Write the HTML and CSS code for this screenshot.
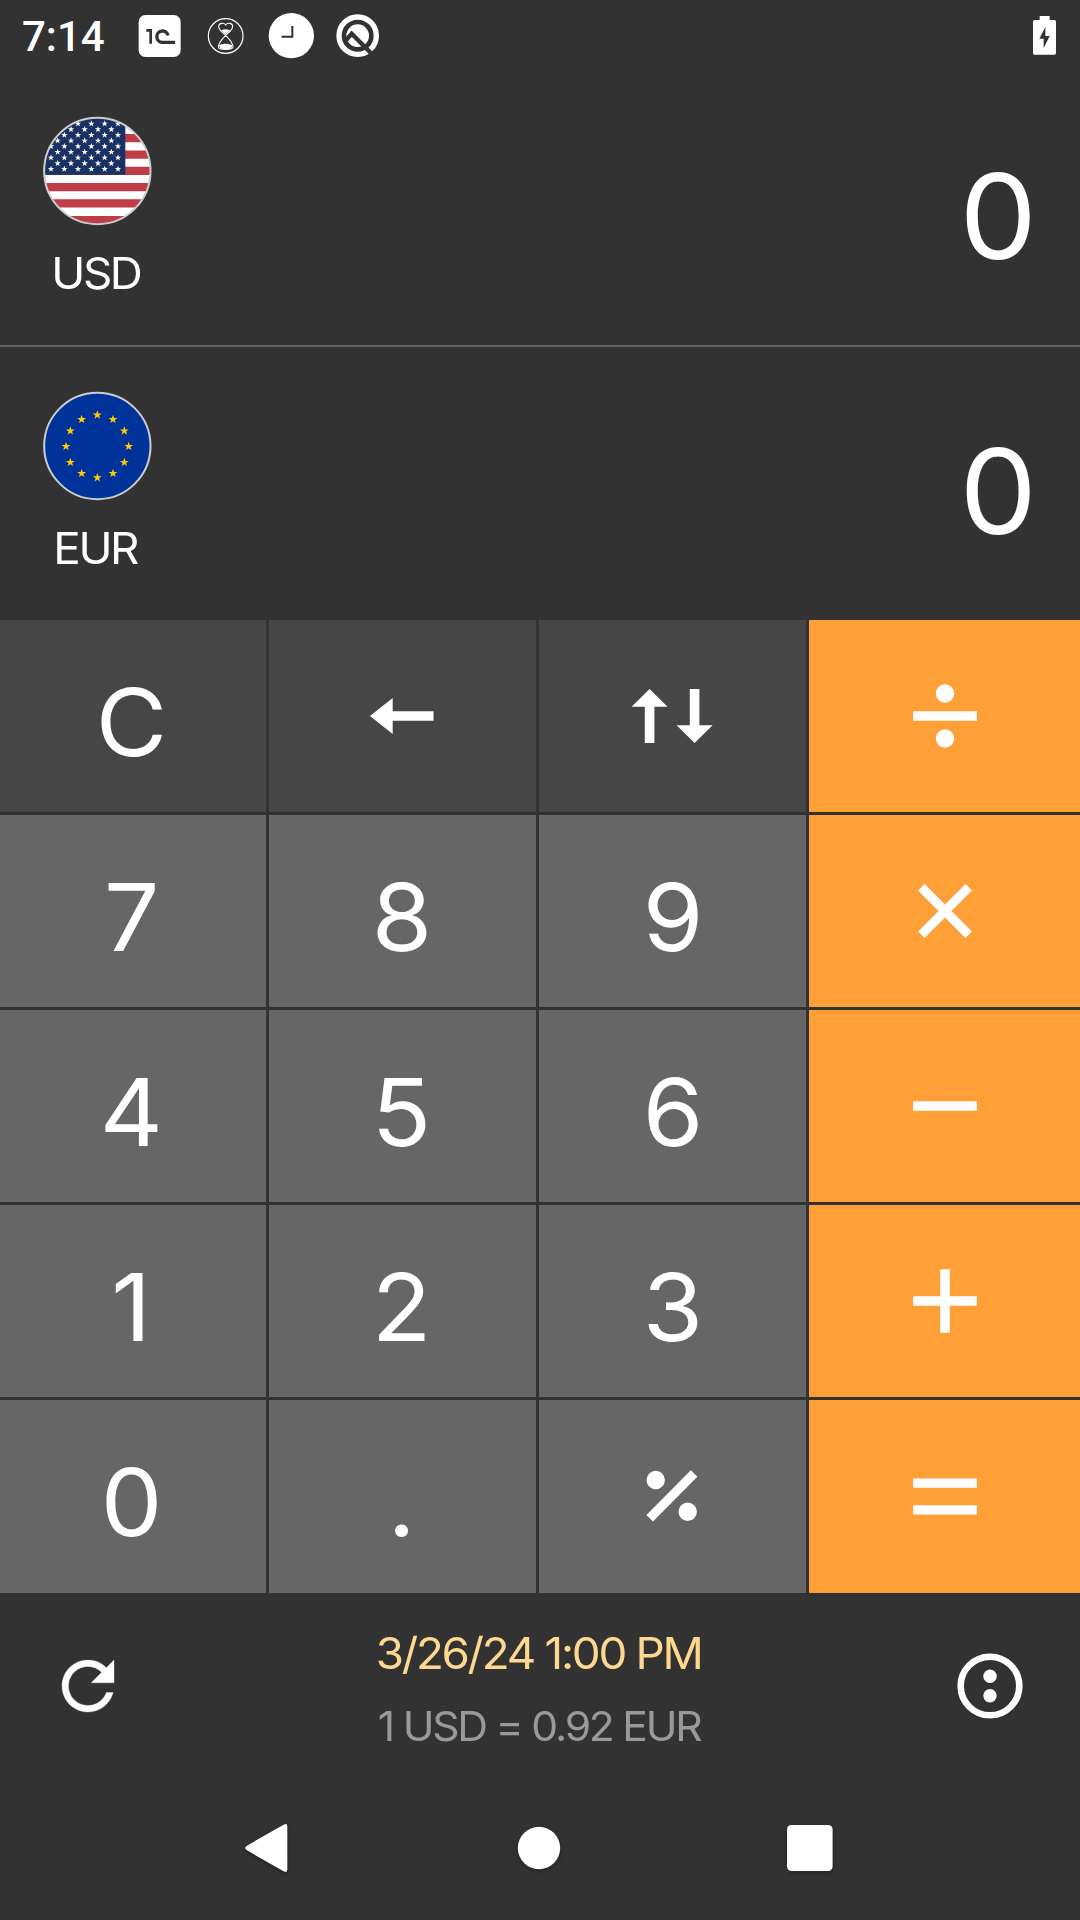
FILE: index.html
```html
<!DOCTYPE html>
<html lang="en">
<head>
<meta charset="utf-8">
<title>Currency calculator</title>
<link rel="stylesheet" href="styles.css">
</head>
<body>
<div class="screen">
  <header class="status">
    <span class="clock">7:14</span>
    <div class="notifications">
      <svg class="note" viewBox="408 36 144 144">
        <rect x="416" y="45" width="126" height="126" rx="20" fill="#fff"/>
        <path d="M439 91h13v40" fill="none" stroke="#323232" stroke-width="8"/>
        <path d="M504 106a17 17 0 1 0-17 21H525" fill="none" stroke="#323232" stroke-width="10"/>
      </svg>
      <svg class="note" viewBox="606 36 144 144">
        <g fill="none" stroke="#fff" stroke-width="3.6">
          <circle cx="677" cy="108" r="52"/>
          <path d="M677 106C666 96 655 89 656 78c1-9 16-11 21-3c5-8 20-6 21 3c1 11-10 18-21 28c-10 10-22 22-22 35c0 10 44 10 44 0c0-13-12-25-22-35z" stroke-width="3.2"/>
        </g>
        <path d="M664 91c8-4 18-4 26 0l-13 13zM657 136c12-6 28-6 40 0l-3 9c-8 4-26 4-34 0z" fill="#fff"/>
      </svg>
      <svg class="note" viewBox="804 36 144 144">
        <circle cx="874" cy="107" r="68" fill="#fff"/>
        <path d="M877 78v32h-32" fill="none" stroke="#323232" stroke-width="6"/>
      </svg>
      <svg class="note" viewBox="1002 36 144 144">
        <circle cx="1073" cy="107" r="56" fill="none" stroke="#fff" stroke-width="16"/>
        <circle cx="1073" cy="107" r="34" fill="#fff"/>
        <path d="M1038 121l17-20L1118 164" fill="none" stroke="#323232" stroke-width="13"/>
      </svg>
    </div>
    <svg class="battery" viewBox="90 36 90 144">
      <path d="M119 48h30v12h14q5 0 5 5v94q0 5-5 5h-59q-5 0-5-5V65q0-5 5-5h15z" fill="#fff"/>
      <path d="M136 81L118 116h13v28l18-36h-13z" fill="#323232"/>
    </svg>
  </header>

  <section class="currency divided">
    <div class="unit">
      <svg class="flag" viewBox="36 48 330 330">
        <defs>
          <clipPath id="disc"><circle cx="202" cy="213" r="161"/></clipPath>
          <path id="star" d="M0-10L2.4-3.1 9.5-3.1 3.8 1.2 5.9 8.1 0 4 -5.9 8.1 -3.8 1.2 -9.5-3.1 -2.4-3.1z"/>
          <g id="six"><use href="#star" x="63"/><use href="#star" x="103"/><use href="#star" x="144"/><use href="#star" x="184"/><use href="#star" x="224"/><use href="#star" x="264"/></g>
          <g id="five"><use href="#star" x="83"/><use href="#star" x="123"/><use href="#star" x="164"/><use href="#star" x="204"/><use href="#star" x="244"/></g>
        </defs>
        <g clip-path="url(#disc)">
          <path d="M36 48h330v330H36z" fill="#fff"/>
          <path d="M36 65.500h330M36 114.600h330M36 163.700h330M36 212.400h330M36 261.200h330M36 310.400h330M36 360h330" stroke="#bf3d47" stroke-width="24.600"/>
          <path d="M36 48h250v176.500H36z" fill="#1a3163"/>
          <g fill="#fff">
            <use href="#six" y="71"/><use href="#five" y="88"/><use href="#six" y="105"/><use href="#five" y="122"/><use href="#six" y="139"/><use href="#five" y="156"/><use href="#six" y="173"/><use href="#five" y="190"/><use href="#six" y="207"/>
          </g>
        </g>
        <circle cx="202" cy="213" r="159.500" fill="none" stroke="#ccc" stroke-width="6"/>
      </svg>
      <span class="code">USD</span>
    </div>
    <output class="amount">0</output>
  </section>

  <section class="currency">
    <div class="unit">
      <svg class="flag" viewBox="36 33 330 330">
        <circle cx="202" cy="198" r="159.500" fill="#039" stroke="#ccc" stroke-width="6"/>
        <g fill="#fc0" transform="translate(202 199)">
          <use href="#star" transform="translate(0 -94) scale(1.4)"/>
          <use href="#star" transform="translate(47 -81) scale(1.4)"/>
          <use href="#star" transform="translate(81 -46) scale(1.4)"/>
          <use href="#star" transform="translate(94 0) scale(1.4)"/>
          <use href="#star" transform="translate(81 48) scale(1.4)"/>
          <use href="#star" transform="translate(47 81) scale(1.4)"/>
          <use href="#star" transform="translate(0 94) scale(1.4)"/>
          <use href="#star" transform="translate(-47 81) scale(1.4)"/>
          <use href="#star" transform="translate(-81 48) scale(1.4)"/>
          <use href="#star" transform="translate(-94 0) scale(1.4)"/>
          <use href="#star" transform="translate(-81 -46) scale(1.4)"/>
          <use href="#star" transform="translate(-47 -81) scale(1.4)"/>
        </g>
      </svg>
      <span class="code">EUR</span>
    </div>
    <output class="amount">0</output>
  </section>

  <main class="keypad">
    <button class="key dark first"><span class="wide">C</span></button>
    <button class="key dark icon"><svg class="glyph" viewBox="-42 -42 84 84"><path d="M-32 0L-9.300-18V-4.700H31.500V4.700H-9.300V18z"/></svg></button>
    <button class="key dark icon"><svg class="glyph" viewBox="-42 -42 84 84"><path d="M-22.400-27l18 17.800H-17.600V27h-9.600V-9.200h-13.200zM22.600 27l-18-17.800H17.800V-27h9.600V9.200h13.200z"/></svg></button>
    <button class="key accent icon"><svg class="glyph" viewBox="-42 -42 84 84"><path d="M-31.900-4.800h63.800v9.600h-63.800z"/><circle cy="-22.500" r="9.200"/><circle cy="22.500" r="9.200"/></svg></button>

    <button class="key first"><span class="wide">7</span></button>
    <button class="key"><span class="wide">8</span></button>
    <button class="key third"><span class="wide">9</span></button>
    <button class="key accent icon"><svg class="glyph" viewBox="-42 -42 84 84"><path class="line" d="M-23.700-23.700L23.700 23.700M23.700-23.700L-23.700 23.700"/></svg></button>

    <button class="key first"><span class="wide">4</span></button>
    <button class="key"><span class="wide">5</span></button>
    <button class="key third"><span class="wide">6</span></button>
    <button class="key accent icon"><svg class="glyph" viewBox="-42 -42 84 84"><path d="M-31.900-4.800h63.800v9.600h-63.800z"/></svg></button>

    <button class="key first"><span class="wide">1</span></button>
    <button class="key"><span class="wide">2</span></button>
    <button class="key third"><span class="wide">3</span></button>
    <button class="key accent icon"><svg class="glyph" viewBox="-42 -42 84 84"><path d="M-31.900-4.800h27.100v-27h9.600v27h27.100v9.600h-27.100v27h-9.600v-27h-27.100z"/></svg></button>

    <button class="key first"><span class="wide">0</span></button>
    <button class="key"><span class="wide">.</span></button>
    <button class="key icon"><svg class="glyph" viewBox="-42 -41 84 84"><path class="line" d="M-22.300 22.200L22.100-22.400"/><circle cx="-16.300" cy="-16" r="9.200"/><circle cx="15.700" cy="15.800" r="9.200"/></svg></button>
    <button class="key accent icon"><svg class="glyph" viewBox="-42 -42 84 84"><path d="M-31.900-18.500h63.800v9.300h-63.800zM-31.900 8.200h63.800v9.300h-63.800z"/></svg></button>
  </main>

  <footer class="rates">
    <svg class="action" viewBox="0 0 24 24"><path d="M17.650 6.350C16.200 4.900 14.210 4 12 4c-4.420 0-7.990 3.580-7.990 8s3.570 8 7.990 8c3.730 0 6.840-2.550 7.730-6h-2.080c-.82 2.330-3.040 4-5.650 4-3.310 0-6-2.690-6-6s2.690-6 6-6c1.660 0 3.140.69 4.220 1.780L13 11h7V4l-2.350 2.350z" fill="#fff" stroke="#fff" stroke-width=".1"/></svg>
    <div class="info">
      <span class="date">3/26/24 1:00 PM</span>
      <span class="rate">1 USD = 0.92 EUR</span>
    </div>
    <svg class="action" viewBox="-39 -39 78 78"><circle r="29.300" fill="none" stroke="#fff" stroke-width="6.600"/><circle cy="-9.700" r="6.700" fill="#fff"/><circle cy="9.700" r="6.700" fill="#fff"/></svg>
  </footer>

  <nav class="navbar">
    <svg class="nav" viewBox="-30 -30 60 60"><path d="M-21.500-2.100Q-24 0-21.500 2.100L16 23.500Q19.300 25 19.300 21.500V-21.500Q19.300-25 16-23.500z" fill="#fff"/></svg>
    <svg class="nav" viewBox="-30 -30 60 60"><circle r="21.200" fill="#fff"/></svg>
    <svg class="nav" viewBox="-30 -30 60 60"><rect x="-23" y="-23" width="45.600" height="46" rx="4.500" fill="#fff"/></svg>
  </nav>
</div>
</body>
</html>
```
FILE: styles.css
```css
* {
  box-sizing: border-box;
}

body {
  margin: 0;
  background: #323232;
  color: #fff;
  font-family: Inter, "Liberation Sans", sans-serif;
}

.screen {
  display: flex;
  flex-direction: column;
  width: 1080px;
  height: 1920px;
  overflow: hidden;
}

svg {
  display: block;
  flex: none;
}

/* Slightly extended letterforms for the app's own text */
.wide,
.code,
.amount,
.date,
.rate {
  transform: scaleX(1.04);
}

/* System status bar */
.status {
  display: flex;
  align-items: flex-start;
  height: 72px;
  padding: 12px 20px 0 22px;
}

.clock {
  width: 114px;
  font: 500 42px/50px Roboto, sans-serif;
}

.notifications {
  display: flex;
  flex: 1;
  gap: 18px;
}

.note {
  width: 48px;
  height: 48px;
}

.battery {
  width: 30px;
  height: 48px;
}

/* Currency rows */
.currency {
  display: flex;
  justify-content: space-between;
  height: 273px;
  padding: 44px 45px 0 42px;
}

.currency.divided {
  height: 275px;
  border-bottom: 2px solid #616161;
}

.unit {
  display: flex;
  flex-direction: column;
  align-items: center;
  width: 110px;
}

.flag {
  width: 110px;
  height: 110px;
}

.code {
  margin-top: 20px;
  padding-right: 3px;
  font-size: 44px;
  line-height: 54px;
  letter-spacing: -2.3px;
}

.amount {
  padding-top: 29px;
  font-size: 118px;
  line-height: 142px;
}

/* Keypad */
.keypad {
  display: grid;
  grid-template-columns: 266px 267px 267px 271px;
  grid-template-rows: repeat(4, 192px) 193px;
  gap: 3px;
}

.key {
  display: flex;
  align-items: center;
  justify-content: center;
  margin: 0;
  padding: 12px 1px 0 0;
  border: 0;
  background: #666;
  color: #fff;
  font: 400 94px/1.2 Inter, sans-serif;
}

.key.first {
  padding-right: 3px;
}

.key.third {
  padding-right: 0;
  padding-left: 1px;
}

.key.dark {
  background: #464646;
}

.key.icon {
  padding-top: 0;
  padding-right: 2px;
}

.key.accent {
  padding-right: 0;
  background: #ff9f38;
}

.glyph {
  width: 84px;
  height: 84px;
  fill: #fff;
}

.line {
  fill: none;
  stroke: #fff;
  stroke-width: 9.2px;
}

/* Rate footer */
.rates {
  display: flex;
  align-items: center;
  justify-content: space-between;
  height: 184px;
  padding: 2px 51px 0 49px;
}

.action {
  width: 78px;
  height: 78px;
}

.info {
  display: flex;
  flex-direction: column;
  align-items: center;
  gap: 20px;
  padding-top: 6px;
  white-space: nowrap;
}

.date {
  color: #ffd88f;
  font-size: 44px;
  line-height: 54px;
  letter-spacing: -2.2px;
}

.rate {
  color: #999;
  font-size: 41px;
  line-height: 52px;
  letter-spacing: -2.15px;
}

/* System navigation */
.navbar {
  display: flex;
  justify-content: center;
  gap: 211px;
  height: 143px;
  padding: 41px 2px 0 0;
}

.nav {
  width: 60px;
  height: 60px;
  filter: drop-shadow(0 2px 2px rgba(0, 0, 0, .25));
}
```
